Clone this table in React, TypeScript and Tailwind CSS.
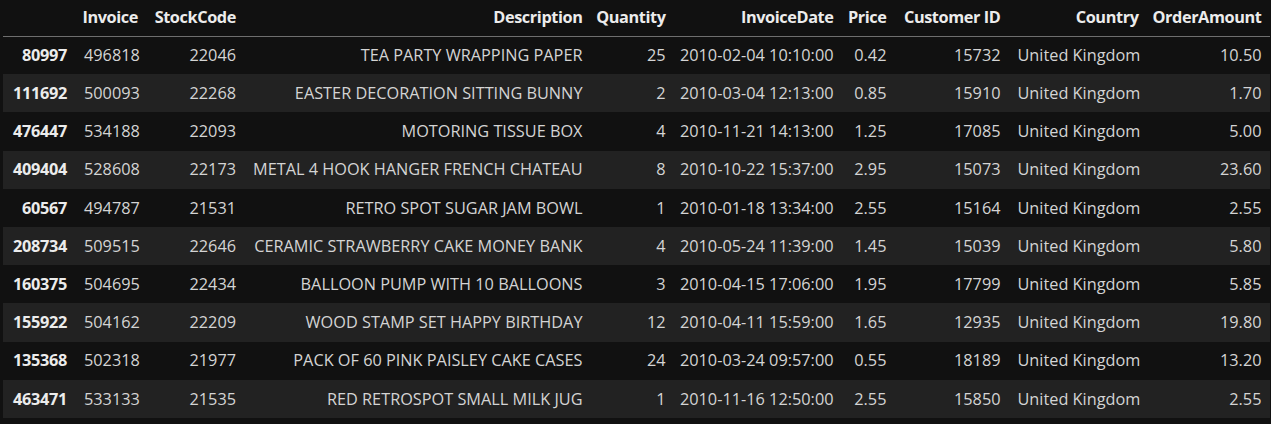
const columns = [
  { key: 'Invoice', align: 'left', w: 'w-[71px]' },
  { key: 'StockCode', align: 'right', w: 'w-[98px]' },
  { key: 'Description', align: 'right', w: 'w-[346.5px]' },
  { key: 'Quantity', align: 'right', w: 'w-[83px]' },
  { key: 'InvoiceDate', align: 'right', w: 'w-[168px]' },
  { key: 'Price', align: 'right', w: 'w-[53px]' },
  { key: 'Customer ID', align: 'right', w: 'w-[114px]' },
  { key: 'Country', align: 'left', w: 'w-[138px]' },
  { key: 'OrderAmount', align: 'right', w: 'w-[123px]' },
];

const rows = [
  ['80997', '496818', '22046', 'TEA PARTY WRAPPING PAPER', '25', '2010-02-04 10:10:00', '0.42', '15732', 'United Kingdom', '10.50'],
  ['111692', '500093', '22268', 'EASTER DECORATION SITTING BUNNY', '2', '2010-03-04 12:13:00', '0.85', '15910', 'United Kingdom', '1.70'],
  ['476447', '534188', '22093', 'MOTORING TISSUE BOX', '4', '2010-11-21 14:13:00', '1.25', '17085', 'United Kingdom', '5.00'],
  ['409404', '528608', '22173', 'METAL 4 HOOK HANGER FRENCH CHATEAU', '8', '2010-10-22 15:37:00', '2.95', '15073', 'United Kingdom', '23.60'],
  ['60567', '494787', '21531', 'RETRO SPOT SUGAR JAM BOWL', '1', '2010-01-18 13:34:00', '2.55', '15164', 'United Kingdom', '2.55'],
  ['208734', '509515', '22646', 'CERAMIC STRAWBERRY CAKE MONEY BANK', '4', '2010-05-24 11:39:00', '1.45', '15039', 'United Kingdom', '5.80'],
  ['160375', '504695', '22434', 'BALLOON PUMP WITH 10 BALLOONS', '3', '2010-04-15 17:06:00', '1.95', '17799', 'United Kingdom', '5.85'],
  ['155922', '504162', '22209', 'WOOD STAMP SET HAPPY BIRTHDAY', '12', '2010-04-11 15:59:00', '1.65', '12935', 'United Kingdom', '19.80'],
  ['135368', '502318', '21977', 'PACK OF 60 PINK PAISLEY CAKE CASES', '24', '2010-03-24 09:57:00', '0.55', '18189', 'United Kingdom', '13.20'],
  ['463471', '533133', '21535', 'RED RETROSPOT SMALL MILK JUG', '1', '2010-11-16 12:50:00', '2.55', '15850', 'United Kingdom', '2.55'],
];

export default function App() {
  return (
    <div className="w-[1271px] h-[424px] bg-[#111111] pl-[3px] font-['Open_Sans',sans-serif] text-[16.3px] text-[#d4d4d4] overflow-hidden">
      <table className="table-fixed border-collapse w-[1267px] whitespace-nowrap">
        <colgroup>
          <col className="w-[72.5px]" />
          {columns.map((c) => (
            <col key={c.key} className={c.w} />
          ))}
        </colgroup>
        <thead>
          <tr className="h-[36px] border-b border-[#6e6e6e]">
            <th className="px-[8.5px]" />
            {columns.map((c) => (
              <th key={c.key} className="px-[8.5px] pb-[1px] text-right font-bold tracking-[-0.4px] text-[#ececec]">
                <div className="flex justify-end">{c.key}</div>
              </th>
            ))}
          </tr>
        </thead>
        <tbody>
          {rows.map((r, i) => (
            <tr key={r[0]} className={`h-[38.2px] ${i % 2 === 1 ? 'bg-[#222222]' : 'bg-[#111111]'}`}>
              <th className="px-[8.5px] text-right font-bold tracking-[-0.3px] text-[#ececec]">
                <div className="flex justify-end">{r[0]}</div>
              </th>
              {columns.map((c, j) => (
                <td
                  key={c.key}
                  className={`px-[8.5px] ${c.align === 'left' ? 'text-left' : 'text-right'}`}
                >
                  {c.align === 'left' ? r[j + 1] : <div className="flex justify-end">{r[j + 1]}</div>}
                </td>
              ))}
            </tr>
          ))}
        </tbody>
      </table>
    </div>
  );
}
